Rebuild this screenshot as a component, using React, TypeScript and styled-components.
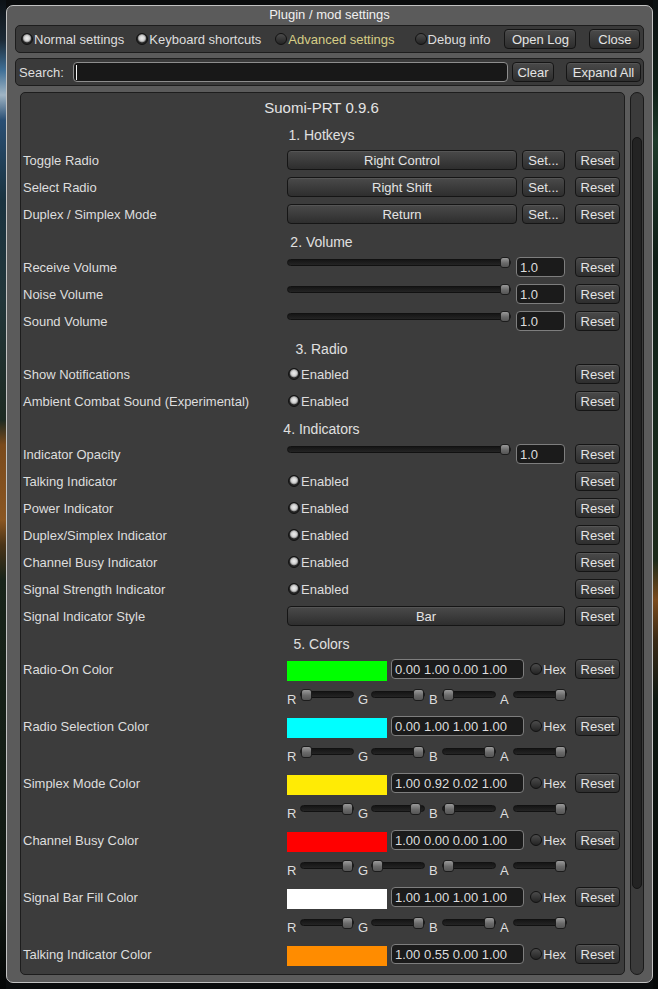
import React from "react"
import styled, { createGlobalStyle } from "styled-components"

const GlobalStyle = createGlobalStyle`
  html, body {
    margin: 0;
    padding: 0;
    background: #0a0c0d;
  }
  * {
    box-sizing: border-box;
  }
  body {
    font-family: "Liberation Sans", Arial, sans-serif;
    font-size: 13px;
    color: #dedede;
  }
`

// game world peeking out behind the window
const Page = styled.div`
  width: 658px;
  height: 989px;
  padding: 5px 5px 0 6px;
  overflow: hidden;
  background:
    linear-gradient(
        180deg,
        #0d1216 0,
        #1c2a36 40px,
        #3f6f96 70px,
        #9fb4c4 95px,
        #2a4f74 120px,
        #1a3340 200px,
        #22363a 300px,
        #1d2a22 420px,
        #7a4a1c 445px,
        #8a5622 520px,
        #4a3418 545px,
        #18241a 580px,
        #101812 900px,
        #050606 989px
      )
      left top / 6px 100% no-repeat,
    linear-gradient(
        180deg,
        #0c1012 0,
        #102018 90px,
        #1e3a2a 140px,
        #0f1d16 260px,
        #16281c 400px,
        #1c2a1a 560px,
        #7a4a1c 600px,
        #3a2a16 640px,
        #0e1812 700px,
        #060808 989px
      )
      right top / 5px 100% no-repeat,
    #0a0c0d;
`

const Window = styled.div`
  width: 647px;
  height: 978px;
  display: flex;
  flex-direction: column;
  background: #5b5b5b;
  border: 1px solid #c2c2c2;
  border-radius: 7px;
  overflow: hidden;
`

const TitleBar = styled.div`
  height: 19px;
  line-height: 17px;
  text-align: center;
  color: #f0f0f0;
`

const Toolbar = styled.div<{ $pl: number; $pr: number }>`
  height: 28px;
  margin: 0 8px;
  display: flex;
  align-items: center;
  background: #3a3a3a;
  border: 1px solid #1d1d1d;
  border-radius: 5px;
  padding: 0 ${(p) => p.$pr}px 0 ${(p) => p.$pl}px;

  & + & {
    margin-top: 5px;
  }
`

const Option = styled.div<{ $ml?: number; $accent?: boolean }>`
  display: flex;
  align-items: center;
  gap: 1px;
  margin-left: ${(p) => p.$ml ?? 0}px;
  color: ${(p) => (p.$accent ? "#d6cd86" : "#dedede")};
  white-space: nowrap;
  flex: none;
`

const Dot = styled.span<{ $on?: boolean }>`
  width: 12px;
  height: 12px;
  flex: none;
  border-radius: 50%;
  border: 1px solid #121212;
  background: ${(p) =>
    p.$on
      ? "radial-gradient(circle at 50% 42%, #eeeeee 0, #d2d2d2 2.6px, #9a9a9a 3.6px, #262626 4.6px)"
      : "linear-gradient(#4c4c4c, #242424)"};
`

const Button = styled.button<{ $w: number; $ml?: number }>`
  width: ${(p) => p.$w}px;
  height: 20px;
  margin: 0 0 0 ${(p) => p.$ml ?? 0}px;
  padding: 0;
  flex: none;
  font: inherit;
  color: #e4e4e4;
  white-space: nowrap;
  background: linear-gradient(#4a4a4a, #2e2e2e);
  border: 1px solid #151515;
  border-radius: 4px;
  box-shadow: inset 0 1px 0 rgba(255, 255, 255, 0.07);
`

const SearchLabel = styled.span`
  white-space: nowrap;
`

const SearchField = styled.div`
  flex: 1;
  height: 20px;
  margin-left: 9px;
  display: flex;
  align-items: center;
  padding-left: 2px;
  background: #181818;
  border: 1px solid #8e8e8e;
  border-radius: 4px;
`

const Caret = styled.span`
  width: 1px;
  height: 15px;
  background: #f4f4f4;
`

const Body = styled.div`
  flex: 1;
  min-height: 0;
  display: flex;
  gap: 5px;
  padding: 6px 8px 7px 13px;
`

const Panel = styled.div`
  flex: 1;
  overflow: hidden;
  padding: 4px 4px 0 2px;
  background: #3c3c3c;
  border: 1px solid #1d1d1d;
  border-radius: 5px;
`

const ModTitle = styled.div`
  height: 22px;
  line-height: 22px;
  margin-bottom: 5px;
  text-align: center;
  font-size: 15px;
  color: #e4e4e4;
`

const SectionHeader = styled.div`
  height: 22px;
  line-height: 23px;
  margin-bottom: 4px;
  text-align: center;
  font-size: 14px;
  color: #e0e0e0;
`

const Row = styled.div<{ $h?: number }>`
  display: grid;
  grid-template-columns: 254px 278px 45px;
  grid-template-rows: ${(p) => p.$h ?? 20}px;
  column-gap: 10px;
  align-items: center;
  height: ${(p) => p.$h ?? 20}px;
  margin-bottom: 7px;
`

const Label = styled.div`
  height: 20px;
  padding-top: 1px;
  line-height: 20px;
  white-space: nowrap;
`

const Controls = styled.div<{ $gap?: number; $span?: boolean }>`
  display: flex;
  align-items: center;
  gap: ${(p) => p.$gap ?? 0}px;
  height: 100%;
  grid-column: ${(p) => (p.$span ? "2 / 4" : "auto")};
`

const Track = styled.div<{ $w: number; $mt: number }>`
  position: relative;
  width: ${(p) => p.$w}px;
  height: 7px;
  flex: none;
  align-self: flex-start;
  margin-top: ${(p) => p.$mt}px;
  background: linear-gradient(#151515, #242424);
  border: 1px solid #111;
  border-radius: 4px;
`

const Thumb = styled.span<{ $w: number; $h: number }>`
  position: absolute;
  top: -3px;
  width: ${(p) => p.$w}px;
  height: ${(p) => p.$h}px;
  background: linear-gradient(#9a9a9a, #6a6a6a 55%, #555);
  border: 1px solid #1c1c1c;
  border-radius: 3px;
`

const ValueBox = styled.div<{ $w: number }>`
  width: ${(p) => p.$w}px;
  height: 20px;
  flex: none;
  padding: 1px 0 0 3px;
  line-height: 18px;
  white-space: nowrap;
  background: #1b1b1b;
  border: 1px solid #7e7e7e;
  border-radius: 4px;
`

const Swatch = styled.div<{ $color: string }>`
  width: 100px;
  height: 20px;
  flex: none;
  align-self: flex-start;
  margin-top: 2px;
  background: ${(p) => p.$color};
`

const Channel = styled.div`
  display: flex;
  align-items: flex-start;
  height: 100%;
`

const Letter = styled.span`
  width: 13px;
  margin-top: 6px;
  line-height: 15px;
  flex: none;
`

const Scrollbar = styled.div`
  width: 14px;
  flex: none;
  display: flex;
  flex-direction: column;
  padding-top: 44px;
  background: #3b3b3b;
  border: 1px solid #1a1a1a;
  border-radius: 7px;
`

const ScrollThumb = styled.div`
  height: 752px;
  margin: 0 1px;
  background: #232323;
  border: 1px solid #151515;
  border-radius: 6px;
`

type Setting =
  | { kind: "key"; label: string; key: string }
  | { kind: "volume"; label: string; value: number }
  | { kind: "toggle"; label: string }
  | { kind: "choice"; label: string; value: string }
  | { kind: "color"; label: string; rgba: number[] }

const sections: { title: string; items: Setting[] }[] = [
  {
    title: "1. Hotkeys",
    items: [
      { kind: "key", label: "Toggle Radio", key: "Right Control" },
      { kind: "key", label: "Select Radio", key: "Right Shift" },
      { kind: "key", label: "Duplex / Simplex Mode", key: "Return" },
    ],
  },
  {
    title: "2. Volume",
    items: [
      { kind: "volume", label: "Receive Volume", value: 1 },
      { kind: "volume", label: "Noise Volume", value: 1 },
      { kind: "volume", label: "Sound Volume", value: 1 },
    ],
  },
  {
    title: "3. Radio",
    items: [
      { kind: "toggle", label: "Show Notifications" },
      { kind: "toggle", label: "Ambient Combat Sound (Experimental)" },
    ],
  },
  {
    title: "4. Indicators",
    items: [
      { kind: "volume", label: "Indicator Opacity", value: 1 },
      { kind: "toggle", label: "Talking Indicator" },
      { kind: "toggle", label: "Power Indicator" },
      { kind: "toggle", label: "Duplex/Simplex Indicator" },
      { kind: "toggle", label: "Channel Busy Indicator" },
      { kind: "toggle", label: "Signal Strength Indicator" },
      { kind: "choice", label: "Signal Indicator Style", value: "Bar" },
    ],
  },
  {
    title: "5. Colors",
    items: [
      { kind: "color", label: "Radio-On Color", rgba: [0, 1, 0, 1] },
      { kind: "color", label: "Radio Selection Color", rgba: [0, 1, 1, 1] },
      { kind: "color", label: "Simplex Mode Color", rgba: [1, 0.92, 0.02, 1] },
      { kind: "color", label: "Channel Busy Color", rgba: [1, 0, 0, 1] },
      { kind: "color", label: "Signal Bar Fill Color", rgba: [1, 1, 1, 1] },
      { kind: "color", label: "Talking Indicator Color", rgba: [1, 0.55, 0, 1] },
    ],
  },
]

const Slider = ({ value, w, thumbW, thumbH, mt }: { value: number; w: number; thumbW: number; thumbH: number; mt: number }) => (
  <Track $w={w} $mt={mt}>
    <Thumb $w={thumbW} $h={thumbH} style={{ left: value * (w - 2 - thumbW) }} />
  </Track>
)

const SettingRows = ({ item }: { item: Setting }) => {
  const reset = <Button $w={45}>Reset</Button>

  if (item.kind === "key") {
    return (
      <Row>
        <Label>{item.label}</Label>
        <Controls $gap={5}>
          <Button $w={230}>{item.key}</Button>
          <Button $w={43}>Set...</Button>
        </Controls>
        {reset}
      </Row>
    )
  }

  if (item.kind === "volume") {
    return (
      <Row>
        <Label>{item.label}</Label>
        <Controls $gap={5}>
          <Slider value={item.value} w={224} thumbW={10} thumbH={11} mt={2} />
          <ValueBox $w={49}>{item.value.toFixed(1)}</ValueBox>
        </Controls>
        {reset}
      </Row>
    )
  }

  if (item.kind === "toggle") {
    return (
      <Row>
        <Label>{item.label}</Label>
        <Controls>
          <Option $ml={1}>
            <Dot $on />
            Enabled
          </Option>
        </Controls>
        {reset}
      </Row>
    )
  }

  if (item.kind === "choice") {
    return (
      <Row>
        <Label>{item.label}</Label>
        <Button $w={278}>{item.value}</Button>
        {reset}
      </Row>
    )
  }

  const [r, g, b, a] = item.rgba
  const swatch = `rgba(${Math.round(r * 255)}, ${Math.round(g * 255)}, ${Math.round(b * 255)}, ${a})`
  return (
    <>
      <Row>
        <Label>{item.label}</Label>
        <Controls $gap={4}>
          <Swatch $color={swatch} />
          <ValueBox $w={133}>{item.rgba.map((v) => v.toFixed(2)).join(" ")}</ValueBox>
          <Option $ml={2}>
            <Dot />
            Hex
          </Option>
        </Controls>
        {reset}
      </Row>
      <Row $h={23}>
        <span />
        <Controls $gap={4} $span>
          {["R", "G", "B", "A"].map((ch, i) => (
            <Channel key={ch}>
              <Letter>{ch}</Letter>
              <Slider value={item.rgba[i]} w={54} thumbW={11} thumbH={12} mt={5} />
            </Channel>
          ))}
        </Controls>
      </Row>
    </>
  )
}

export default function App() {
  return (
    <Page>
      <GlobalStyle />
      <Window>
        <TitleBar>Plugin / mod settings</TitleBar>

        <Toolbar $pl={5} $pr={3}>
          <Option>
            <Dot $on />
            Normal settings
          </Option>
          <Option $ml={12}>
            <Dot $on />
            Keyboard shortcuts
          </Option>
          <Option $ml={14} $accent>
            <Dot />
            Advanced settings
          </Option>
          <Option $ml={20}>
            <Dot />
            Debug info
          </Option>
          <Button $w={72} $ml={14}>
            Open Log
          </Button>
          <Button $w={51} $ml={13}>
            Close
          </Button>
        </Toolbar>

        <Toolbar $pl={3} $pr={2}>
          <SearchLabel>Search:</SearchLabel>
          <SearchField>
            <Caret />
          </SearchField>
          <Button $w={42} $ml={4}>
            Clear
          </Button>
          <Button $w={75} $ml={12}>
            Expand All
          </Button>
        </Toolbar>

        <Body>
          <Panel>
            <ModTitle>Suomi-PRT 0.9.6</ModTitle>
            {sections.map((section) => (
              <React.Fragment key={section.title}>
                <SectionHeader>{section.title}</SectionHeader>
                {section.items.map((item) => (
                  <SettingRows key={item.label} item={item} />
                ))}
              </React.Fragment>
            ))}
          </Panel>
          <Scrollbar>
            <ScrollThumb />
          </Scrollbar>
        </Body>
      </Window>
    </Page>
  )
}
